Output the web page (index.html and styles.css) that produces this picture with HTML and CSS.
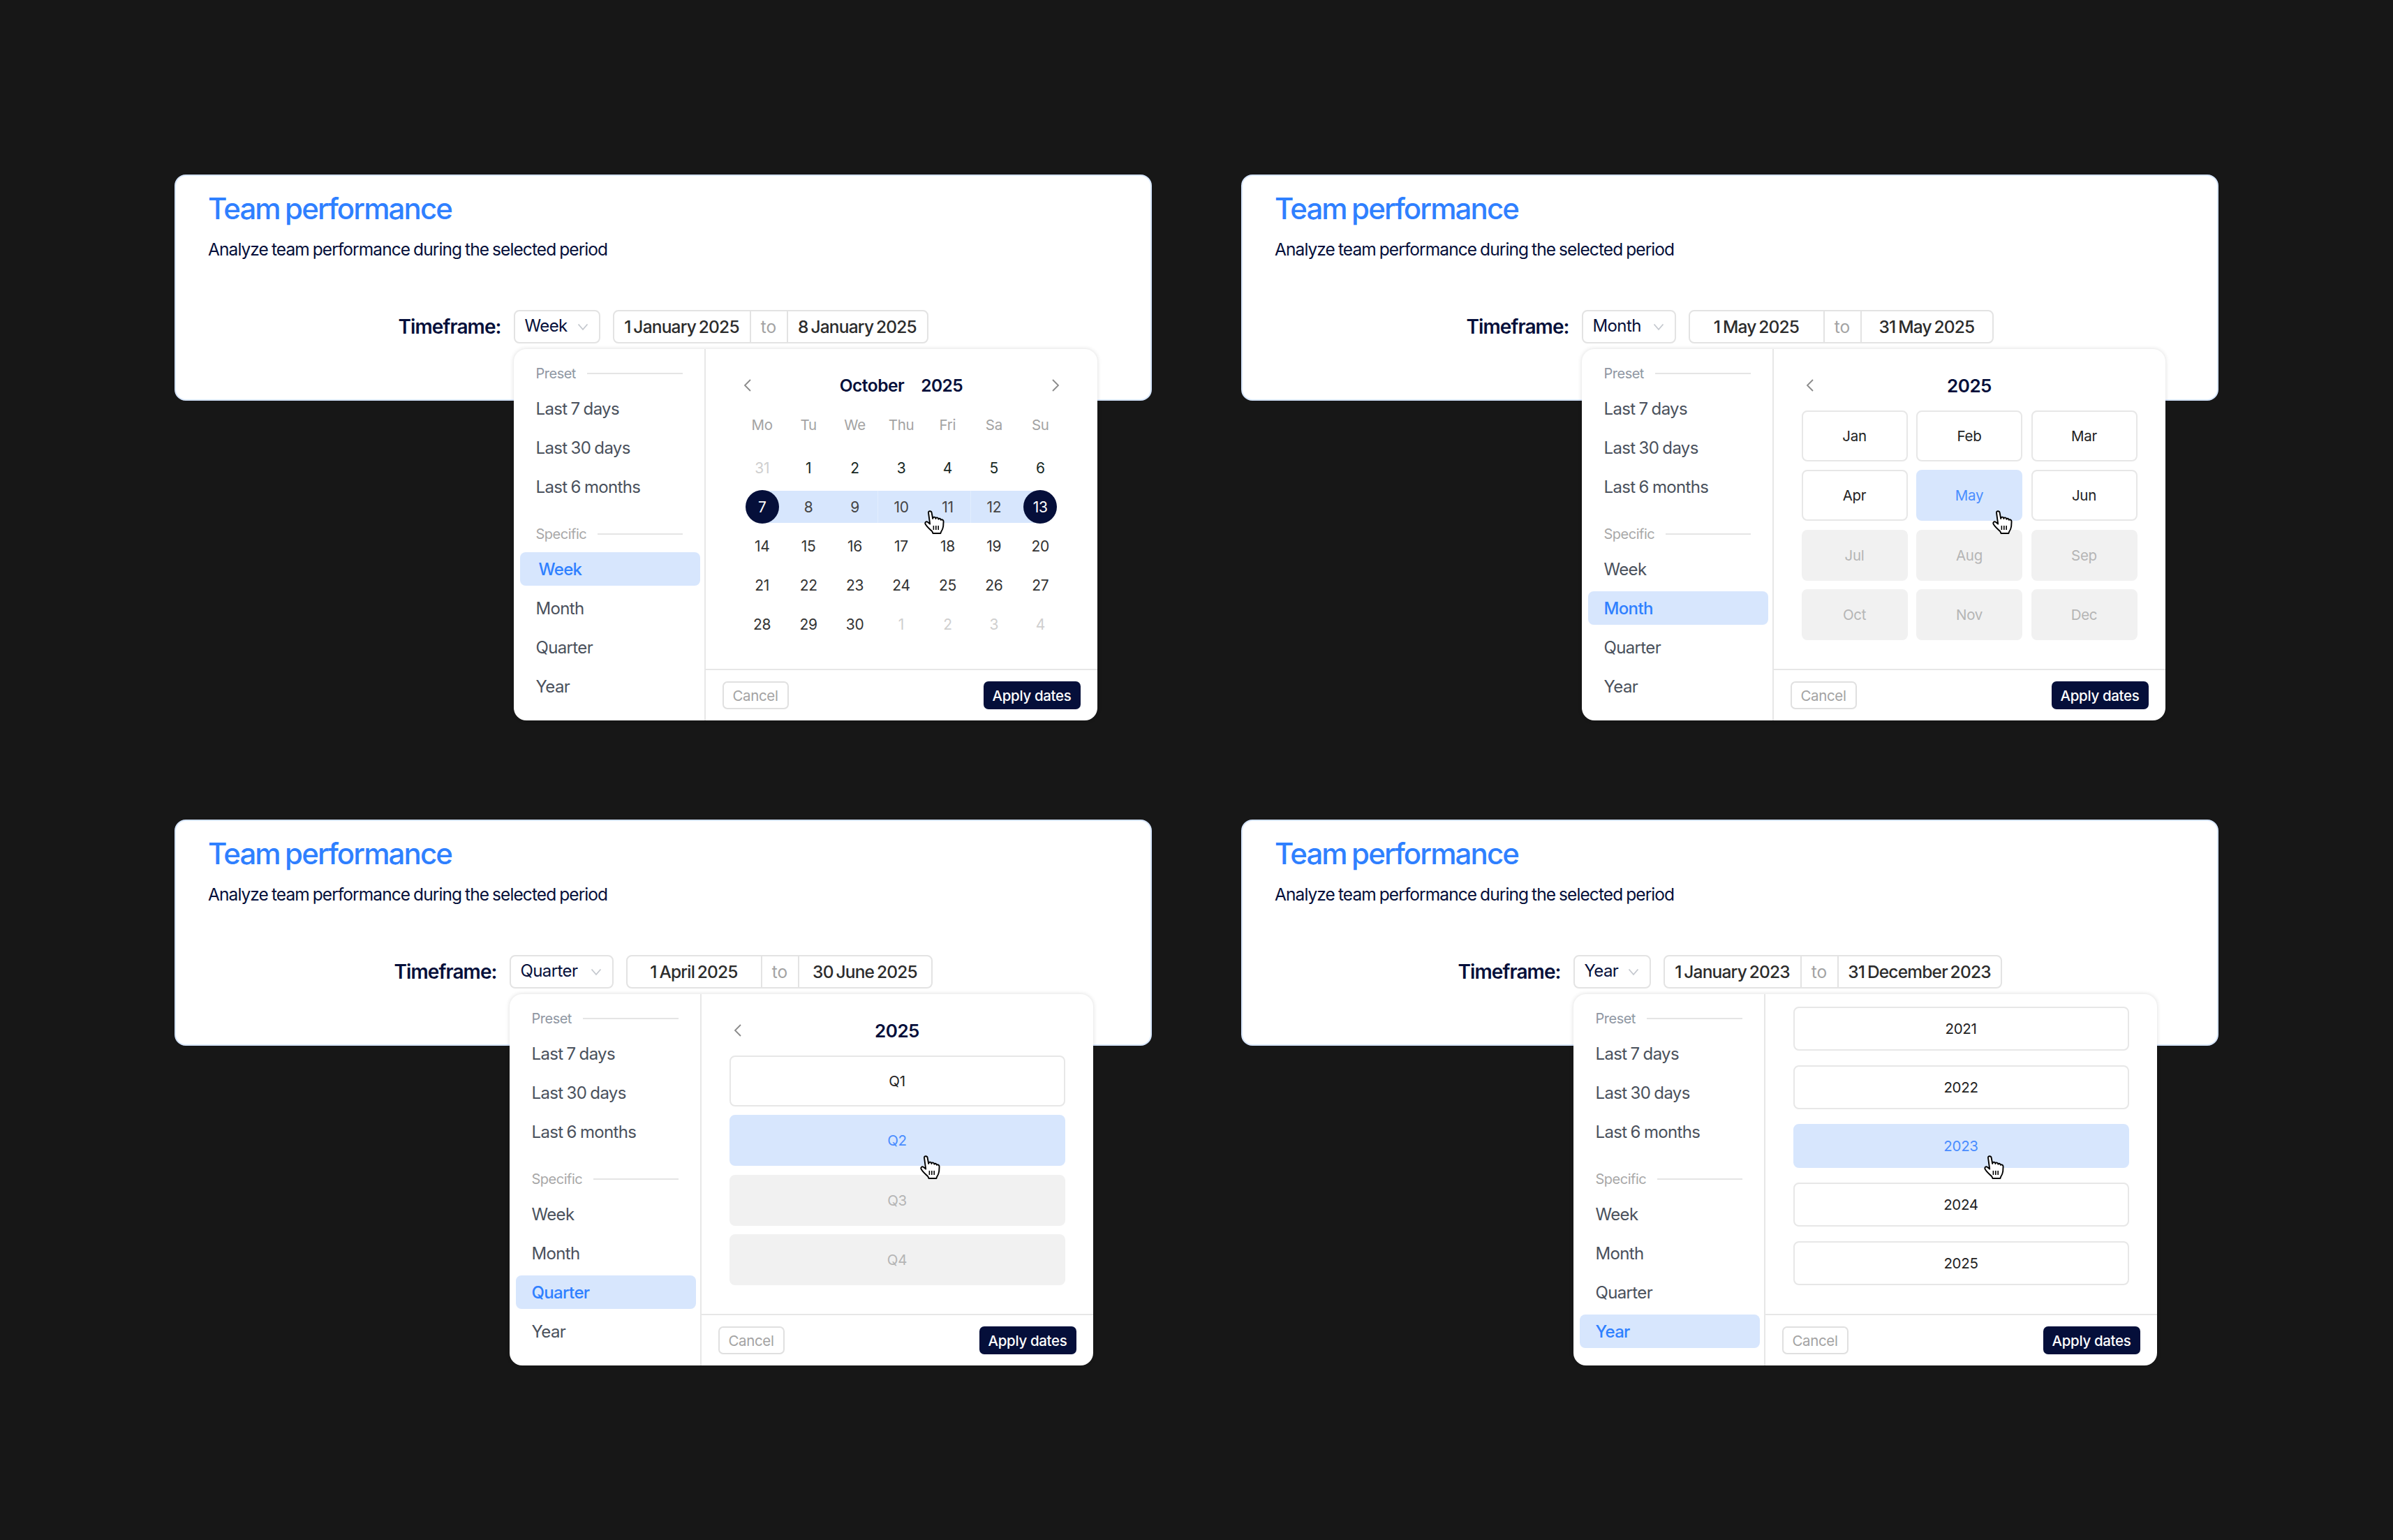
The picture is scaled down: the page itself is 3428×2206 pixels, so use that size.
FILE: index.html
```html
<!DOCTYPE html>
<html lang="en">

<head>
  <meta charset="utf-8" />
  <meta name="viewport" content="width=device-width, initial-scale=1" />
  <title>Team performance</title>
  <link rel="stylesheet" href="styles.css">
</head>

<body>
  <svg class="defs" width="0" height="0">
    <symbol id="hand" viewBox="0 0 29 34">
      <path d="M6 3.4C5.8 .6 10 .4 10.6 3.2L12.2 12C12.6 8.8 16 8.8 16.4 12C16.8 9.6 20 9.8 20.4 12.8C21 11 23.4 11.4 23.8 13.8C25.2 12.6 27.6 13.6 27.6 16L27.2 23C26.8 26.6 25.4 28.8 24 31L23.4 33H12.6L11.2 30.2C8.4 27.4 4.4 24.4 1.8 20C.4 17.6 2.6 15.2 4.8 16.8L8.2 19.6Z" fill="#fff" stroke="#000" stroke-width="1.9" stroke-linejoin="round"/>
      <path d="M13.4 22V28M16.8 22V28M20.2 22V28" fill="none" stroke="#000" stroke-width="1.6"/>
    </symbol>
    <symbol id="chev-down" viewBox="0 0 18 18">
      <path d="M2.5 5.5L9 13L15.5 5.5" fill="none" stroke="#c4c8ce" stroke-width="1.8"/>
    </symbol>
    <symbol id="chev-left" viewBox="0 0 12 20">
      <path d="M10 2L2 10L10 18" fill="none" stroke="#8a8a8a" stroke-width="1.8"/>
    </symbol>
    <symbol id="chev-right" viewBox="0 0 12 20">
      <path d="M2 2L10 10L2 18" fill="none" stroke="#8a8a8a" stroke-width="1.8"/>
    </symbol>
  </svg>

  <main class="board">

    <!-- week -->
    <section class="card">
      <h1>Team performance</h1>
      <p class="sub">Analyze team performance during the selected period</p>
      <div class="timeframe">
        <span class="tf-label">Timeframe:</span>
        <div class="select-wrap">
          <div class="select sel-week">Week <svg class="chev"><use href="#chev-down"/></svg></div>
          <div class="popover">
            <div class="side">
              <div class="side-label">Preset</div>
              <div class="side-item">Last 7 days</div>
              <div class="side-item">Last 30 days</div>
              <div class="side-item">Last 6 months</div>
              <div class="side-label second">Specific</div>
              <div class="side-item active nudge">Week</div>
              <div class="side-item">Month</div>
              <div class="side-item">Quarter</div>
              <div class="side-item">Year</div>
            </div>
            <div class="panel">
              <div class="panel-body">
                <div class="head head-cal">
                  <svg class="arrow"><use href="#chev-left"/></svg>
                  <div class="head-title"><span>October</span><span>2025</span></div>
                  <svg class="arrow arrow-r"><use href="#chev-right"/></svg>
                </div>
                <div class="cal">
                  <div class="wd">Mo</div><div class="wd">Tu</div><div class="wd">We</div><div class="wd">Thu</div><div class="wd">Fri</div><div class="wd">Sa</div><div class="wd">Su</div>
                  <div class="day out">31</div><div class="day first">1</div><div class="day first">2</div><div class="day first">3</div><div class="day first">4</div><div class="day first">5</div><div class="day first">6</div>
                  <div class="day range start"><span>7</span></div><div class="day range">8</div><div class="day range">9</div><div class="day range">10</div><div class="day range">11</div><div class="day range">12</div><div class="day range end"><span>13</span></div>
                  <div class="day">14</div><div class="day">15</div><div class="day">16</div><div class="day">17</div><div class="day">18</div><div class="day">19</div><div class="day">20</div>
                  <div class="day">21</div><div class="day">22</div><div class="day">23</div><div class="day">24</div><div class="day">25</div><div class="day">26</div><div class="day">27</div>
                  <div class="day">28</div><div class="day">29</div><div class="day">30</div><div class="day out">1</div><div class="day out">2</div><div class="day out">3</div><div class="day out">4</div>
                </div>
              </div>
              <div class="foot">
                <button class="btn-cancel">Cancel</button>
                <button class="btn-apply">Apply dates</button>
              </div>
            </div>
            <svg class="hand"><use href="#hand"/></svg>
          </div>
        </div>
        <div class="dates">
          <div class="date w196">1 January 2025</div>
          <div class="date-to">to</div>
          <div class="date w201">8 January 2025</div>
        </div>
      </div>
    </section>

    <!-- month -->
    <section class="card">
      <h1>Team performance</h1>
      <p class="sub">Analyze team performance during the selected period</p>
      <div class="timeframe">
        <span class="tf-label">Timeframe:</span>
        <div class="select-wrap">
          <div class="select sel-month">Month <svg class="chev"><use href="#chev-down"/></svg></div>
          <div class="popover">
            <div class="side">
              <div class="side-label">Preset</div>
              <div class="side-item">Last 7 days</div>
              <div class="side-item">Last 30 days</div>
              <div class="side-item">Last 6 months</div>
              <div class="side-label second">Specific</div>
              <div class="side-item">Week</div>
              <div class="side-item active">Month</div>
              <div class="side-item">Quarter</div>
              <div class="side-item">Year</div>
            </div>
            <div class="panel">
              <div class="panel-body">
                <div class="head">
                  <svg class="arrow"><use href="#chev-left"/></svg>
                  <div class="head-title">2025</div>
                </div>
                <div class="tiles months">
                  <div class="tile">Jan</div><div class="tile">Feb</div><div class="tile">Mar</div>
                  <div class="tile">Apr</div><div class="tile on">May</div><div class="tile">Jun</div>
                  <div class="tile off">Jul</div><div class="tile off">Aug</div><div class="tile off">Sep</div>
                  <div class="tile off">Oct</div><div class="tile off">Nov</div><div class="tile off">Dec</div>
                </div>
              </div>
              <div class="foot">
                <button class="btn-cancel">Cancel</button>
                <button class="btn-apply">Apply dates</button>
              </div>
            </div>
            <svg class="hand"><use href="#hand"/></svg>
          </div>
        </div>
        <div class="dates">
          <div class="date w193">1 May 2025</div>
          <div class="date-to">to</div>
          <div class="date w191">31 May 2025</div>
        </div>
      </div>
    </section>

    <!-- quarter -->
    <section class="card">
      <h1>Team performance</h1>
      <p class="sub">Analyze team performance during the selected period</p>
      <div class="timeframe">
        <span class="tf-label">Timeframe:</span>
        <div class="select-wrap">
          <div class="select sel-quarter">Quarter <svg class="chev"><use href="#chev-down"/></svg></div>
          <div class="popover">
            <div class="side">
              <div class="side-label">Preset</div>
              <div class="side-item">Last 7 days</div>
              <div class="side-item">Last 30 days</div>
              <div class="side-item">Last 6 months</div>
              <div class="side-label second">Specific</div>
              <div class="side-item">Week</div>
              <div class="side-item">Month</div>
              <div class="side-item active">Quarter</div>
              <div class="side-item">Year</div>
            </div>
            <div class="panel">
              <div class="panel-body">
                <div class="head">
                  <svg class="arrow"><use href="#chev-left"/></svg>
                  <div class="head-title">2025</div>
                </div>
                <div class="tiles quarters">
                  <div class="tile">Q1</div>
                  <div class="tile on">Q2</div>
                  <div class="tile off">Q3</div>
                  <div class="tile off">Q4</div>
                </div>
              </div>
              <div class="foot">
                <button class="btn-cancel">Cancel</button>
                <button class="btn-apply">Apply dates</button>
              </div>
            </div>
            <svg class="hand"><use href="#hand"/></svg>
          </div>
        </div>
        <div class="dates">
          <div class="date w193">1 April 2025</div>
          <div class="date-to">to</div>
          <div class="date w189">30 June 2025</div>
        </div>
      </div>
    </section>

    <!-- year -->
    <section class="card">
      <h1>Team performance</h1>
      <p class="sub">Analyze team performance during the selected period</p>
      <div class="timeframe">
        <span class="tf-label">Timeframe:</span>
        <div class="select-wrap">
          <div class="select sel-year">Year <svg class="chev"><use href="#chev-down"/></svg></div>
          <div class="popover">
            <div class="side">
              <div class="side-label">Preset</div>
              <div class="side-item">Last 7 days</div>
              <div class="side-item">Last 30 days</div>
              <div class="side-item">Last 6 months</div>
              <div class="side-label second">Specific</div>
              <div class="side-item">Week</div>
              <div class="side-item">Month</div>
              <div class="side-item">Quarter</div>
              <div class="side-item active">Year</div>
            </div>
            <div class="panel">
              <div class="panel-body">
                <div class="tiles years">
                  <div class="tile">2021</div>
                  <div class="tile">2022</div>
                  <div class="tile on">2023</div>
                  <div class="tile">2024</div>
                  <div class="tile">2025</div>
                </div>
              </div>
              <div class="foot">
                <button class="btn-cancel">Cancel</button>
                <button class="btn-apply">Apply dates</button>
              </div>
            </div>
            <svg class="hand"><use href="#hand"/></svg>
          </div>
        </div>
        <div class="dates">
          <div class="date w196">1 January 2023</div>
          <div class="date-to">to</div>
          <div class="date w232">31 December 2023</div>
        </div>
      </div>
    </section>

  </main>
</body>

</html>
```

FILE: styles.css
```css
html,
body {
  margin: 0;
  padding: 0;
  background-color: #171717;
  font-family: Inter, "Liberation Sans", sans-serif;
  color: #050f3a;
}

.defs {
  position: absolute;
}

.board {
  display: grid;
  grid-template-columns: 1400px 1400px;
  grid-auto-rows: 324px;
  column-gap: 128px;
  row-gap: 600px;
  padding: 250px 0 0 250px;
  height: 1956px;
}

.card {
  box-sizing: border-box;
  background-color: #fff;
  border: 2px solid #d7e6fd;
  border-radius: 16px;
  padding: 22px 46px 0;
}

h1 {
  margin: 0;
  font-size: 42px;
  line-height: 50px;
  font-weight: 500;
  letter-spacing: -1.9px;
  word-spacing: -2px;
  color: #2f80ff;
}

.sub {
  margin: 17px 0 0;
  font-size: 24.5px;
  line-height: 32px;
  letter-spacing: -0.92px;
  word-spacing: -1px;
}

.timeframe {
  display: flex;
  justify-content: center;
  align-items: center;
  margin: 71px -46px 0;
  height: 48px;
}

.tf-label {
  width: 144px;
  margin-right: 21px;
  font-size: 28px;
  font-weight: 600;
  letter-spacing: -0.9px;
  white-space: nowrap;
}

.select-wrap {
  position: relative;
  margin-right: 18px;
}

.select {
  box-sizing: border-box;
  display: flex;
  align-items: center;
  justify-content: space-between;
  height: 48px;
  padding: 0 14px 4px;
  border: 2px solid #e3e3e3;
  border-radius: 8px;
  font-size: 24px;
  letter-spacing: -0.6px;
}

.sel-week { width: 124px; }
.sel-month { width: 135px; }
.sel-quarter { width: 149px; }
.sel-year { width: 111px; }

.chev {
  width: 18px;
  height: 18px;
  margin-top: 4px;
}

.dates {
  display: flex;
  height: 48px;
  box-sizing: border-box;
  border: 2px solid #e3e3e3;
  border-radius: 8px;
  font-size: 24.5px;
  font-weight: 500;
  letter-spacing: -0.8px;
  word-spacing: -2px;
  color: #2c2c2c;
}

.date,
.date-to {
  display: flex;
  align-items: center;
  justify-content: center;
  white-space: nowrap;
}

.date-to {
  box-sizing: border-box;
  width: 55px;
  border-left: 2px solid #e3e3e3;
  border-right: 2px solid #e3e3e3;
  color: #a3a3a3;
  font-weight: 400;
  letter-spacing: 0;
}

.w189 { width: 189px; }
.w191 { width: 187px; }
.w193 { width: 191px; }
.w196 { width: 194px; }
.w201 { width: 199px; }
.w232 { width: 232px; }

/* dropdown */

.popover {
  position: absolute;
  top: 56px;
  left: 0;
  z-index: 2;
  display: flex;
  width: 836px;
  height: 532px;
  background-color: #fff;
  border-radius: 18px;
  box-shadow: 0 0 6px rgba(0, 0, 0, 0.14);
}

.side {
  box-sizing: border-box;
  flex: none;
  width: 275px;
  padding-top: 25px;
  border-right: 2px solid #e7e7e7;
}

.side-label {
  display: flex;
  align-items: center;
  gap: 16px;
  height: 20px;
  margin: 0 31px 16px 32px;
  font-size: 20px;
  letter-spacing: -0.5px;
  color: #8f97a3;
}

.side-label::after {
  content: "";
  flex: 1;
  height: 2px;
  background-color: #e5e5e5;
}

.side-label.second {
  margin-top: 34px;
  color: #a8a8a8;
}

.side-item {
  display: flex;
  align-items: center;
  height: 48px;
  margin: 8px 6px 8px 9px;
  padding-left: 23px;
  border-radius: 8px;
  font-size: 24px;
  letter-spacing: -0.65px;
  word-spacing: -1px;
  color: #4a515c;
}

.side-item.active {
  background-color: #d7e6fd;
  color: #2f80ff;
  font-weight: 500;
}

.side-item.nudge {
  padding-left: 27px;
}

.panel {
  flex: 1;
  display: flex;
  flex-direction: column;
}

.panel-body {
  flex: 1;
  padding-top: 32px;
}

.head {
  display: grid;
  grid-template-columns: 1fr auto 1fr;
  align-items: center;
  height: 40px;
  padding: 0 46px;
}

.head-cal {
  padding: 0 54px;
}

.arrow {
  width: 12px;
  height: 20px;
}

.arrow-r {
  justify-self: end;
}

.head-title {
  display: flex;
  gap: 24px;
  font-size: 26px;
  font-weight: 600;
  letter-spacing: -0.5px;
}

.head-cal .head-title {
  font-size: 24.5px;
}

.cal {
  display: grid;
  grid-template-columns: repeat(7, 1fr);
  grid-template-rows: 62px repeat(5, 56px);
  width: 465px;
  margin: 8px 0 0 48px;
  font-size: 21px;
  letter-spacing: -0.3px;
}

.wd,
.day {
  display: flex;
  align-items: center;
  justify-content: center;
}

.wd {
  height: 56px;
  color: #a3a3a3;
  font-size: 20.5px;
}

.day {
  color: #333;
}

.day.first {
  color: #16281f;
}

.day.out {
  color: #cfcfcf;
}

.day.range {
  color: #444;
  background: linear-gradient(#d7e6fd, #d7e6fd) center / 100% 46px no-repeat;
}

.day.start {
  background-position: right center;
  background-size: 50% 46px;
}

.day.end {
  background-position: left center;
  background-size: 50% 46px;
}

.day span {
  display: flex;
  align-items: center;
  justify-content: center;
  width: 48px;
  height: 48px;
  border-radius: 50%;
  background-color: #050f3a;
  color: #fff;
}

.tiles {
  display: grid;
  width: 481px;
  margin: 16px auto 0;
  font-size: 20.5px;
  letter-spacing: -0.3px;
}

.months {
  grid-template-columns: repeat(3, 152px);
  grid-auto-rows: 73px;
  column-gap: 12.5px;
  row-gap: 12.3px;
}

.quarters {
  grid-auto-rows: 73px;
  row-gap: 12.3px;
}

.years {
  grid-auto-rows: 63px;
  row-gap: 21px;
  margin-top: -14px;
}

.tile {
  box-sizing: border-box;
  display: flex;
  align-items: center;
  justify-content: center;
  border: 2px solid #e7e7e7;
  border-radius: 8px;
  color: #222;
}

.tile.on {
  background-color: #d7e6fd;
  border-color: #d7e6fd;
  color: #4a8dff;
}

.tile.off {
  background-color: #f1f1f1;
  border-color: #f1f1f1;
  color: #b5b5b5;
}

.foot {
  box-sizing: border-box;
  display: flex;
  align-items: center;
  justify-content: space-between;
  height: 74px;
  padding: 0 24px;
  border-top: 2px solid #e7e7e7;
}

.foot button {
  height: 40px;
  border-radius: 7px;
  font-family: inherit;
  font-size: 20.5px;
  letter-spacing: -0.35px;
  padding: 0;
}

.btn-cancel {
  width: 95px;
  background-color: #fff;
  border: 2px solid #e0e0e0;
  color: #a3a3a3;
}

.btn-apply {
  width: 139px;
  background-color: #050f3a;
  border: 0;
  color: #fff;
  font-weight: 500;
  letter-spacing: -0.6px;
}

.hand {
  position: absolute;
  left: 588px;
  top: 231px;
  width: 29px;
  height: 34px;
}
```
